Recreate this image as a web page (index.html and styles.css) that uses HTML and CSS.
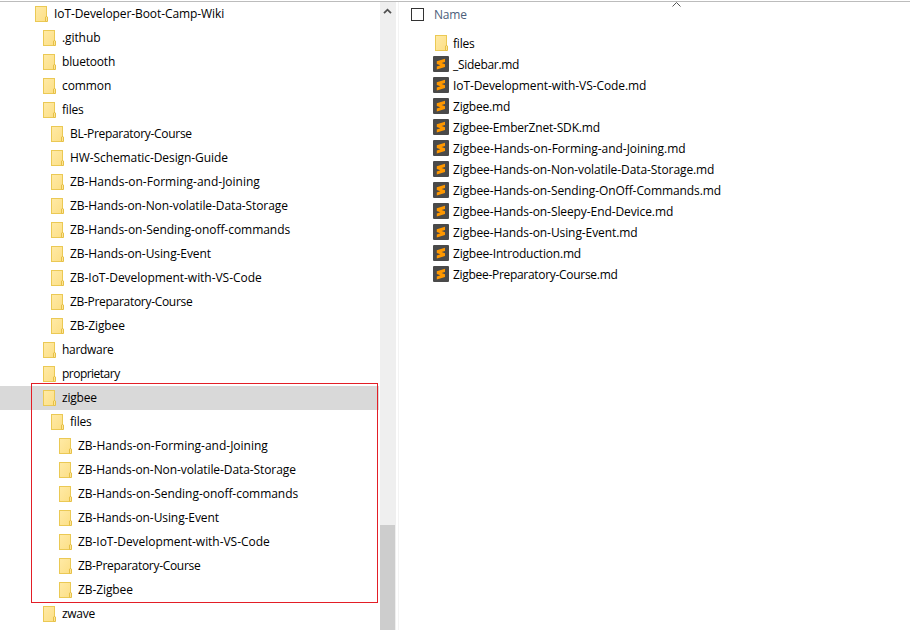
FILE: index.html
```
<!DOCTYPE html>
<html lang="en">
<head>
<meta charset="utf-8">
<title>IoT-Developer-Boot-Camp-Wiki</title>
<link rel="stylesheet" href="styles.css">
</head>
<body>
<svg class="defs" aria-hidden="true">
  <linearGradient id="paper" x1="0" y1="0" x2="1" y2="1"><stop offset="0" stop-color="#ffeaa6"/><stop offset="1" stop-color="#fcdf86"/></linearGradient>
  <symbol id="folder" viewBox="0 0 13 16">
    <rect x=".5" y=".5" width="11" height="15" fill="url(#paper)" stroke="#ebc954"/>
    <path d="M10.5 15.5v-4.5l.5-.5h1l.5.5v4.5z" fill="#fde596" stroke="#e6c047"/>
  </symbol>
  <symbol id="subl" viewBox="0 0 16 16">
    <rect width="16" height="16" rx="1" fill="#4a4a4a"/>
    <path d="M12 2.8v3.1L8.6 7 12 8.2v2.9l-8.2 2.4v-3.1L7.4 9.300 3.800 8.100V5.2z" fill="#ff9800"/>
  </symbol>
</svg>
<div class="window">
  <nav class="tree">
    <div class="row l0"><svg><use href="#folder"/></svg><span>IoT-Developer-Boot-Camp-Wiki</span></div>
    <div class="row l1"><svg><use href="#folder"/></svg><span>.github</span></div>
    <div class="row l1"><svg><use href="#folder"/></svg><span class="snug">bluetooth</span></div>
    <div class="row l1"><svg><use href="#folder"/></svg><span>common</span></div>
    <div class="row l1"><svg><use href="#folder"/></svg><span class="snug">files</span></div>
    <div class="row l2"><svg><use href="#folder"/></svg><span class="tight">BL-Preparatory-Course</span></div>
    <div class="row l2"><svg><use href="#folder"/></svg><span>HW-Schematic-Design-Guide</span></div>
    <div class="row l2"><svg><use href="#folder"/></svg><span class="loose">ZB-Hands-on-Forming-and-Joining</span></div>
    <div class="row l2"><svg><use href="#folder"/></svg><span>ZB-Hands-on-Non-volatile-Data-Storage</span></div>
    <div class="row l2"><svg><use href="#folder"/></svg><span class="even">ZB-Hands-on-Sending-onoff-commands</span></div>
    <div class="row l2"><svg><use href="#folder"/></svg><span>ZB-Hands-on-Using-Event</span></div>
    <div class="row l2"><svg><use href="#folder"/></svg><span class="even">ZB-IoT-Development-with-VS-Code</span></div>
    <div class="row l2"><svg><use href="#folder"/></svg><span class="tight">ZB-Preparatory-Course</span></div>
    <div class="row l2"><svg><use href="#folder"/></svg><span>ZB-Zigbee</span></div>
    <div class="row l1"><svg><use href="#folder"/></svg><span class="tight">hardware</span></div>
    <div class="row l1"><svg><use href="#folder"/></svg><span class="tighter">proprietary</span></div>
    <div class="row l1 selected"><svg><use href="#folder"/></svg><span class="snug">zigbee</span></div>
    <div class="row l2"><svg><use href="#folder"/></svg><span class="snug">files</span></div>
    <div class="row l3"><svg><use href="#folder"/></svg><span class="loose">ZB-Hands-on-Forming-and-Joining</span></div>
    <div class="row l3"><svg><use href="#folder"/></svg><span>ZB-Hands-on-Non-volatile-Data-Storage</span></div>
    <div class="row l3"><svg><use href="#folder"/></svg><span class="even">ZB-Hands-on-Sending-onoff-commands</span></div>
    <div class="row l3"><svg><use href="#folder"/></svg><span>ZB-Hands-on-Using-Event</span></div>
    <div class="row l3"><svg><use href="#folder"/></svg><span class="even">ZB-IoT-Development-with-VS-Code</span></div>
    <div class="row l3"><svg><use href="#folder"/></svg><span class="tight">ZB-Preparatory-Course</span></div>
    <div class="row l3"><svg><use href="#folder"/></svg><span>ZB-Zigbee</span></div>
    <div class="row l1"><svg><use href="#folder"/></svg><span class="tight">zwave</span></div>
    <div class="highlight"></div>
  </nav>
  <div class="scrollbar">
    <svg class="up" viewBox="0 0 9 7"><path d="M1 5.2 4.5 1.7 8 5.2" fill="none" stroke="#505050" stroke-width="1.8"/></svg>
    <div class="thumb"></div>
  </div>
  <main class="content">
    <header class="head">
      <span class="check"></span><span class="name">Name</span>
      <svg class="sort" viewBox="0 0 9 5"><path d="M.5 4.500l4-4 4 4" fill="none" stroke="#555"/></svg>
    </header>
    <div class="file dir"><svg><use href="#folder"/></svg><span class="snug">files</span></div>
    <div class="file"><svg><use href="#subl"/></svg><span class="tight">_Sidebar.md</span></div>
    <div class="file"><svg><use href="#subl"/></svg><span>IoT-Development-with-VS-Code.md</span></div>
    <div class="file"><svg><use href="#subl"/></svg><span class="snug">Zigbee.md</span></div>
    <div class="file"><svg><use href="#subl"/></svg><span class="snug">Zigbee-EmberZnet-SDK.md</span></div>
    <div class="file"><svg><use href="#subl"/></svg><span class="even">Zigbee-Hands-on-Forming-and-Joining.md</span></div>
    <div class="file"><svg><use href="#subl"/></svg><span>Zigbee-Hands-on-Non-volatile-Data-Storage.md</span></div>
    <div class="file"><svg><use href="#subl"/></svg><span>Zigbee-Hands-on-Sending-OnOff-Commands.md</span></div>
    <div class="file"><svg><use href="#subl"/></svg><span>Zigbee-Hands-on-Sleepy-End-Device.md</span></div>
    <div class="file"><svg><use href="#subl"/></svg><span>Zigbee-Hands-on-Using-Event.md</span></div>
    <div class="file"><svg><use href="#subl"/></svg><span class="snug">Zigbee-Introduction.md</span></div>
    <div class="file"><svg><use href="#subl"/></svg><span class="tight">Zigbee-Preparatory-Course.md</span></div>
  </main>
</div>
</body>
</html>
```
FILE: styles.css
```
* { box-sizing: border-box; }
body { margin: 0; background: #fff; color: #000; font: 12px/16px "Open Sans", "Noto Sans", sans-serif; overflow: hidden; }
.defs { position: absolute; width: 0; height: 0; }
.window { display: flex; width: 910px; height: 629px; margin-top: 1px; border-top: 1px solid #bcbcbc; }
.tree { position: relative; width: 380px; flex: none; }
.row { display: flex; align-items: center; gap: 6px; width: 379px; height: 24px; white-space: nowrap; }
.row svg { width: 13px; height: 16px; flex: none; }
.row span, .file span { letter-spacing: -.09px; }
.row .loose { letter-spacing: 0; }
.row .even, .file .even { letter-spacing: -.04px; }
.row .snug, .file .snug { letter-spacing: -.19px; }
.row .tight, .file .tight { letter-spacing: -.3px; }
.row .tighter { letter-spacing: -.52px; }
.l0 { padding-left: 35px; }
.l1 { padding-left: 43px; }
.l2 { padding-left: 51px; }
.l3 { padding-left: 59px; }
.selected { background: #d9d9d9; }
.highlight { position: absolute; left: 31px; top: 381px; width: 347px; height: 220px; border: 1px solid #e31e26; }
.scrollbar { display: flex; flex-direction: column; justify-content: space-between; width: 16px; flex: none; background: #efefef; }
.up { width: 9px; height: 7px; margin: 6px 0 0 3px; }
.thumb { width: 15px; height: 105px; background: #cdcdcd; }
.content { flex: 1; margin-left: 2px; border-left: 1px solid #f3f3f3; }
.head { display: flex; align-items: center; height: 31px; padding: 0 0 6px 12px; }
.check { width: 13px; height: 13px; border: 1px solid #333; }
.name { width: 238px; margin: 1px 0 0 10px; color: #4c607a; letter-spacing: -.2px; }
.sort { width: 9px; height: 5px; align-self: flex-start; }
.file { display: flex; align-items: center; gap: 4px; height: 21px; padding-left: 34px; white-space: nowrap; }
.file svg { width: 16px; height: 16px; margin-top: -1px; flex: none; }
.dir { padding-left: 36px; gap: 5px; }
.dir svg { width: 13px; }
```
